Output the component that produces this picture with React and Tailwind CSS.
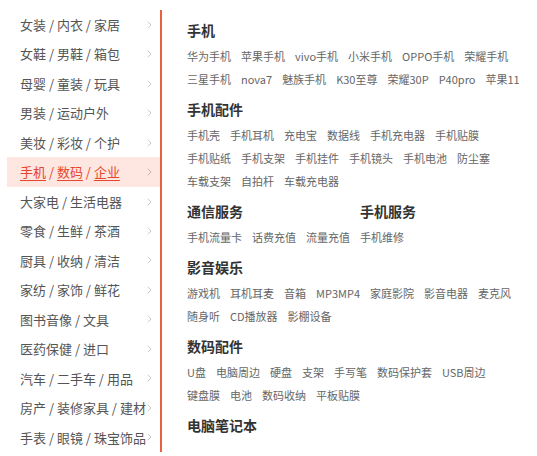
import React from "react";

const cats = [
  ["女装", "内衣", "家居"],
  ["女鞋", "男鞋", "箱包"],
  ["母婴", "童装", "玩具"],
  ["男装", "运动户外"],
  ["美妆", "彩妆", "个护"],
  ["手机", "数码", "企业"],
  ["大家电", "生活电器"],
  ["零食", "生鲜", "茶酒"],
  ["厨具", "收纳", "清洁"],
  ["家纺", "家饰", "鲜花"],
  ["图书音像", "文具"],
  ["医药保健", "进口"],
  ["汽车", "二手车", "用品"],
  ["房产", "装修家具", "建材"],
  ["手表", "眼镜", "珠宝饰品"],
];

const Chevron = ({ active }) => (
  <svg width="5" height="8" viewBox="0 0 5 8" className="shrink-0">
    <path d="M0.8 0.8 L4 4 L0.8 7.2" fill="none" stroke={active ? "#c9a9a0" : "#c4c4c4"} strokeWidth="0.9" />
  </svg>
);

function Heading({ children }) {
  return <div className="text-[14px] leading-5 font-bold text-[#333]">{children}</div>;
}

function Rows({ rows }) {
  return (
    <div className="mt-[5px]">
      {rows.map((r, i) => (
        <div key={i} className="flex gap-x-[10px] text-[11px] leading-[23px] text-[#666] whitespace-nowrap">
          {r.map((t) => (
            <span key={t}>{t}</span>
          ))}
        </div>
      ))}
    </div>
  );
}

export default function App() {
  return (
    <div
      className="w-[537px] h-[456px] bg-white flex pt-[10px] pl-[7px]"
      style={{ fontFamily: '"Noto Sans CJK SC", "Noto Sans", sans-serif' }}
    >
      <div className="w-[153px] h-[442px] flex flex-col">
        {cats.map((c, i) => {
          const active = i === 5;
          return (
            <div
              key={i}
              className={`h-[29.47px] flex items-center justify-between pl-[13px] pr-[8px] text-[13px] ${
                active ? "bg-[#fde7e0] text-[#e9452c]" : "text-[#555]"
              }`}
            >
              <span className="whitespace-nowrap">
                {c.map((w, j) => (
                  <React.Fragment key={j}>
                    {j > 0 && <span> / </span>}
                    <span className={active ? "underline underline-offset-[3px] decoration-[1px]" : ""}>{w}</span>
                  </React.Fragment>
                ))}
              </span>
              <Chevron active={active} />
            </div>
          );
        })}
      </div>
      <div className="w-[2px] h-[442px] bg-[#e8603f]" />
      <div className="pl-[25px] pt-[10px] flex flex-col gap-[8px]">
        <div>
          <Heading>手机</Heading>
          <Rows
            rows={[
              ["华为手机", "苹果手机", "vivo手机", "小米手机", "OPPO手机", "荣耀手机"],
              ["三星手机", "nova7", "魅族手机", "K30至尊", "荣耀30P", "P40pro", "苹果11"],
            ]}
          />
        </div>
        <div>
          <Heading>手机配件</Heading>
          <Rows
            rows={[
              ["手机壳", "手机耳机", "充电宝", "数据线", "手机充电器", "手机贴膜"],
              ["手机贴纸", "手机支架", "手机挂件", "手机镜头", "手机电池", "防尘塞"],
              ["车载支架", "自拍杆", "车载充电器"],
            ]}
          />
        </div>
        <div className="flex gap-x-[10px]">
          <div>
            <Heading>通信服务</Heading>
            <Rows rows={[["手机流量卡", "话费充值", "流量充值"]]} />
          </div>
          <div>
            <Heading>手机服务</Heading>
            <Rows rows={[["手机维修"]]} />
          </div>
        </div>
        <div>
          <Heading>影音娱乐</Heading>
          <Rows
            rows={[
              ["游戏机", "耳机耳麦", "音箱", "MP3MP4", "家庭影院", "影音电器", "麦克风"],
              ["随身听", "CD播放器", "影棚设备"],
            ]}
          />
        </div>
        <div>
          <Heading>数码配件</Heading>
          <Rows
            rows={[
              ["U盘", "电脑周边", "硬盘", "支架", "手写笔", "数码保护套", "USB周边"],
              ["键盘膜", "电池", "数码收纳", "平板贴膜"],
            ]}
          />
        </div>
        <div>
          <Heading>电脑笔记本</Heading>
        </div>
      </div>
    </div>
  );
}
